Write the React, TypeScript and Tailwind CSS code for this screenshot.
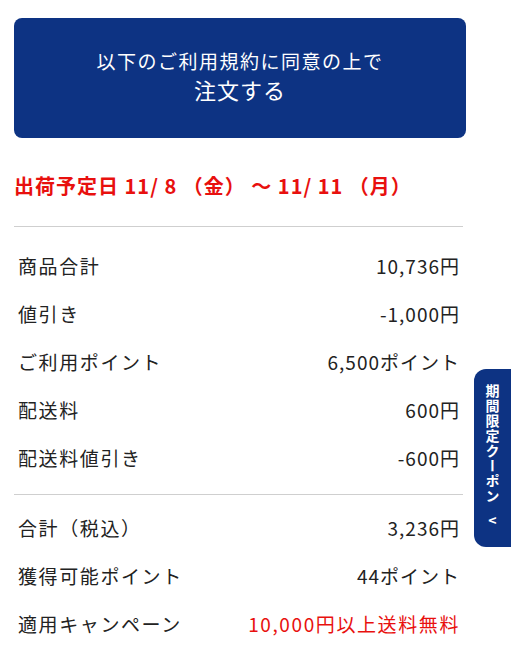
export default function App() {
  const rows1 = [
    { label: "商品合計", value: "10,736円" },
    { label: "値引き", value: "-1,000円" },
    { label: "ご利用ポイント", value: "6,500ポイント" },
    { label: "配送料", value: "600円" },
    { label: "配送料値引き", value: "-600円" },
  ];
  const rows2 = [
    { label: "合計（税込）", value: "3,236円" },
    { label: "獲得可能ポイント", value: "44ポイント" },
    { label: "適用キャンペーン", value: "10,000円以上送料無料", red: true },
  ];

  return (
    <div
      className="relative min-h-[660px] bg-white text-[#222]"
      style={{ fontFamily: '"Noto Sans CJK JP", "Noto Sans", sans-serif' }}
    >
      <div className="w-[452px] ml-[14px] pt-[18px]">
        {/* Order button */}
        <button className="w-full h-[120px] bg-[#0d3383] rounded-[8px] text-white flex flex-col items-center justify-center pb-[6px]">
          <span className="text-[19px] leading-[28px] tracking-[1.5px]">
            以下のご利用規約に同意の上で
          </span>
          <span className="text-[22px] leading-[28px] tracking-[1px]">注文する</span>
        </button>

        {/* Shipping date */}
        <p className="mt-[34px] text-[20px] leading-[28px] font-bold tracking-[1px] text-[#e8100e]">
          出荷予定日 11/ 8 （金） ～ 11/ 11 （月）
        </p>

        <div className="mt-[26px] border-t border-[#cfcfcf] w-[449px]" />

        <div className="pt-[15px] pb-[12px]">
          {rows1.map((r) => (
            <div key={r.label} className="h-12 flex items-center justify-between pl-1 pr-[6px] text-[19px] tracking-[1.6px]">
              <span>{r.label}</span>
              <span className="tracking-[1px]">{r.value}</span>
            </div>
          ))}
        </div>

        <div className="border-t border-[#cfcfcf] w-[449px]" />

        <div className="pt-[9px]">
          {rows2.map((r) => (
            <div key={r.label} className="h-12 flex items-center justify-between pl-1 pr-[6px] text-[19px] tracking-[1.6px]">
              <span>{r.label}</span>
              <span className={r.red ? "tracking-[1.6px] text-[#e8100e]" : "tracking-[1px]"}>{r.value}</span>
            </div>
          ))}
        </div>
      </div>

      {/* Coupon side tab */}
      <div className="absolute right-0 top-[369px] w-[37px] h-[178px] bg-[#0d3383] rounded-l-[12px] flex flex-col items-center pt-[15px] text-white">
        <span
          className="text-[14px] font-bold leading-[18px] tracking-[1px] whitespace-nowrap"
          style={{ writingMode: "vertical-rl" }}
        >
          期間限定クーポン
        </span>
        <span className="mt-[8px] text-[14px] font-bold leading-[16px]">&lt;</span>
      </div>
    </div>
  );
}
